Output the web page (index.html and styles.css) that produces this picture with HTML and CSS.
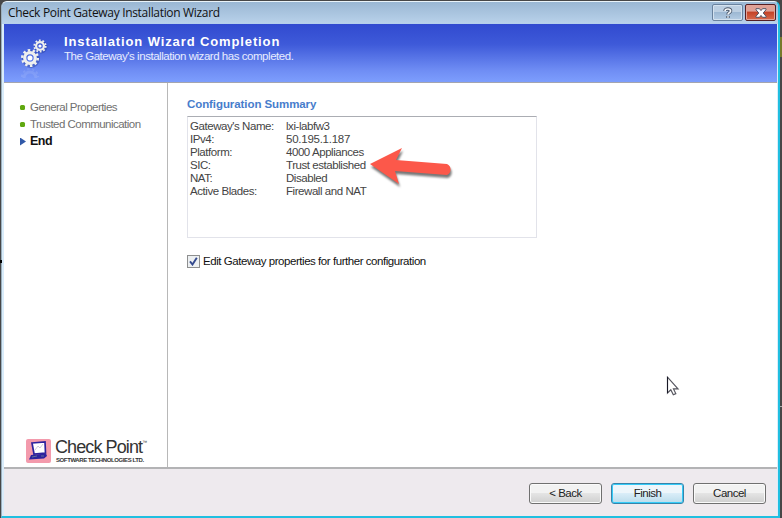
FILE: index.html
```
<!DOCTYPE html>
<html lang="en">
<head>
<meta charset="utf-8">
<title>Check Point Gateway Installation Wizard</title>
<link rel="stylesheet" href="styles.css">
</head>
<body>
<div class="window">
  <header class="titlebar">
    <span class="caption">Check Point Gateway Installation Wizard</span>
    <button class="ctl help" aria-label="Help"><svg width="12" height="14" viewBox="0 0 12 14"><path d="M3 5C3 2.300 8.600 2.300 8.600 5C8.600 6.600 6 6.700 6 8.500M6 10v2" fill="none" stroke="#4c596c" stroke-width="3.400"/><path d="M3 5C3 2.300 8.600 2.300 8.600 5C8.600 6.600 6 6.700 6 8.500M6 10.200v1.500" fill="none" stroke="#f4f7fa" stroke-width="1.700"/></svg></button>
    <button class="ctl close" aria-label="Close"><svg width="12" height="10" viewBox="0 0 12 10"><path d="M1 .7h3.500L6 2.600 7.500 .7H11v1.100L8.200 5l2.800 3.200v1.100H7.500L6 7.400 4.500 9.300H1V8.200L3.800 5 1 1.800z" fill="#fff" stroke="#535666"/></svg></button>
  </header>
  <section class="banner">
    <svg class="gears" width="30" height="42" viewBox="0 0 30 42">
      <g fill="none" stroke="#18308f" opacity=".35" transform="translate(1 1)"><circle cx="10" cy="20" r="7" stroke-width="4"/><circle cx="20" cy="8" r="5" stroke-width="3"/></g>
      <g fill="none" stroke="#f0f0ee">
        <circle cx="10" cy="20" r="5.300" stroke-width="3.200"/><circle cx="10" cy="20" r="7.800" stroke-width="2.500" stroke-dasharray="2.450 2.450"/>
        <circle cx="20" cy="8" r="3.900" stroke-width="2.300"/><circle cx="20" cy="8" r="5.700" stroke-width="1.800" stroke-dasharray="1.800 1.780"/>
      </g>
      <circle cx="10" cy="20" r="2.500" fill="#fff"/><circle cx="20" cy="8" r="1.600" fill="#fff"/>
      <g fill="none" stroke="#fff" opacity=".1"><path d="M4 40a6 6 0 0 1 12 0" stroke-width="3"/><path d="M2 39a8 8 0 0 1 16 0" stroke-width="2" stroke-dasharray="2.400 2.400"/></g>
    </svg>
    <div class="heading">
      <h1>Installation Wizard Completion</h1>
      <p>The Gateway's installation wizard has completed.</p>
    </div>
  </section>
  <main class="content">
    <nav class="sidebar">
      <ul>
        <li><i class="dot"></i><span>General Properties</span></li>
        <li><i class="dot"></i><span>Trusted Communication</span></li>
        <li class="current"><i class="tri"></i><span>End</span></li>
      </ul>
      <div class="brand">
        <svg width="25" height="24" viewBox="0 0 25 24"><rect width="25" height="24" rx="2" fill="#f39aac"/><path d="M6 4L19 3 19.500 14 8 15z" fill="#fff" stroke="#2c229e" stroke-width="1.700"/><path d="M9 11l3-4 2 2 3-4" fill="none" stroke="#b9b5cf" stroke-width=".7"/><path d="M5 16l15-1.500 1 2.500-3 2.500-15 1z" fill="#2c229e"/><path d="M6 18l5-1M15 17l3 0" stroke="#617398"/></svg>
        <div class="wordmark"><div class="name">Check Point<sup>™</sup></div><div class="sub">SOFTWARE TECHNOLOGIES LTD.</div></div>
      </div>
    </nav>
    <section class="panel">
      <h2>Configuration Summary</h2>
      <dl class="summary">
        <dt>Gateway's Name:</dt><dd class="host">lxi-labfw3</dd>
        <dt>IPv4:</dt><dd class="ip">50.195.1.187</dd>
        <dt>Platform:</dt><dd>4000 Appliances</dd>
        <dt>SIC:</dt><dd>Trust established</dd>
        <dt>NAT:</dt><dd>Disabled</dd>
        <dt>Active Blades:</dt><dd>Firewall and NAT</dd>
      </dl>
      <div class="option"><span class="check"><svg width="9" height="9" viewBox="0 0 9 9"><path d="M1 4.300L3.500 7.500 7.800 .8" fill="none" stroke="#344a8e" stroke-width="1.900"/></svg></span><span>Edit Gateway properties for further configuration</span></div>
    </section>
  </main>
  <footer class="footer">
    <button class="btn">&lt; Back</button>
    <button class="btn default">Finish</button>
    <button class="btn">Cancel</button>
  </footer>
</div>
<i class="tick t1"></i><i class="tick t2"></i><i class="tick t3"></i>
<svg class="arrow" width="92" height="46" viewBox="0 0 92 46"><path d="M3 18L35 2 29 14 80 18A6 6 0 0 1 80 29L28 25 32 38z" fill="#fc584a"/></svg>
<svg class="cursor" width="14" height="21" viewBox="0 0 14 21"><path d="M1.500 1.200V17l3.300-3.200 2.500 5 2.500-1.200-2.300-4.700H12z" fill="#fff" stroke="#56565f" stroke-width="1.200"/><path d="M1.500 1v16" stroke="#191926"/></svg>
</body>
</html>
```
FILE: styles.css
```
* { box-sizing: border-box; }
body { margin: 0; width: 782px; height: 518px; overflow: hidden; background: #474747; font: 11.5px/13px "Liberation Sans", sans-serif; color: #444; }
h1, h2, p, ul, dl, dd { margin: 0; padding: 0; }
button { font: inherit; padding: 0; }
.window { width: 779px; height: 517px; margin: 1px 0 0 1px; border: 1px solid #9bb0be; border-right: 2px solid #20bfe0; border-bottom: 2px solid #20bfe0; border-top-color: #e9f3f9; border-radius: 6px 6px 0 0; background: #d9ecfa; padding: 0 1px 0 2px; overflow: hidden; display: flex; flex-direction: column; }
.titlebar { height: 22px; flex: none; margin: 0 -1px 0 -2px; padding: 0 2px 0 6px; background: linear-gradient(#9ab7d3, #b8d1ea); display: flex; align-items: flex-start; border-bottom: 1px solid #b5cfec; }
.caption { font: 12px/22px "Open Sans", sans-serif; letter-spacing: -.32px; color: #111; flex: 1; white-space: nowrap; }
.ctl { width: 31px; height: 17px; margin: 2px 0 0 2px; display: flex; align-items: center; justify-content: center; border: 1px solid #69829e; border-radius: 2px; box-shadow: inset 0 0 0 1px #d4e2ef; background: linear-gradient(#bccfe2 45%, #9db8d3 50%, #b5cde4); }
.close { border-color: #551e22; box-shadow: inset 0 0 0 1px #e2a499; background: linear-gradient(#dfa196 40%, #c44327 48%, #d76b4e); }
.banner { height: 59px; flex: none; background: linear-gradient(#314acf, #3e5ad9 35%, #6f8df4 80%, #7d9efd); border-bottom: 1px solid #a4a5ae; display: flex; color: #fff; }
.gears { margin: 14px 0 0 16px; flex: none; }
.heading { padding: 11px 0 0 14px; }
h1 { font-size: 13px; line-height: 14px; letter-spacing: .88px; white-space: nowrap; }
.heading p { line-height: 14px; letter-spacing: -.46px; color: #e7ecff; white-space: nowrap; }
.content { height: 386px; flex: none; display: flex; background: #fff; border-bottom: 2px solid #b3b3b5; }
.sidebar { width: 164px; height: 384px; border-right: 1px solid #b8b8b8; padding: 16px 0 4px 16px; display: flex; flex-direction: column; justify-content: space-between; }
ul { list-style: none; }
li { height: 17px; line-height: 17px; display: flex; align-items: center; color: #707070; letter-spacing: -.53px; white-space: nowrap; }
.dot { width: 5px; height: 5px; border-radius: 1.5px; background: #60a810; margin-right: 5px; }
.tri { width: 6px; height: 8px; background: #3159a8; clip-path: polygon(0 0, 100% 50%, 0 100%); margin-right: 4px; }
.current { color: #111; font-weight: bold; font-size: 12.5px; letter-spacing: -.5px; }
.brand { display: flex; gap: 4px; padding-left: 6px; }
.wordmark { white-space: nowrap; color: #333; }
.name { font-size: 18px; line-height: 17px; letter-spacing: -.9px; }
.name sup { font-size: 5px; line-height: 0; vertical-align: 9px; }
.sub { font-size: 6px; line-height: 6px; font-weight: bold; letter-spacing: -.4px; padding: 1px 0 0 1px; }
.panel { padding: 14px 0 0 19px; }
h2 { font-size: 11.5px; line-height: 14px; letter-spacing: -.08px; color: #477dcc; }
.summary { width: 350px; height: 122px; margin-top: 5px; padding: 3px 2px; border: 1px solid #e2e3ea; border-top-color: #abadb3; display: grid; grid-template-columns: 96px 1fr; grid-auto-rows: 13px; align-content: start; letter-spacing: -.44px; white-space: nowrap; }
.summary .ip { letter-spacing: -.25px; }
.option { display: flex; align-items: center; gap: 3px; margin-top: 17px; color: #111; letter-spacing: -.45px; white-space: nowrap; }
.check { width: 13px; height: 13px; border: 1px solid #8e8f8f; background: #edf0f2; display: flex; align-items: center; justify-content: center; }
.footer { flex: 1; background: #eeeaee; display: flex; justify-content: flex-end; gap: 9px; padding: 14px 11px 0 0; }
.btn { width: 73px; height: 21px; border: 1px solid #707070; border-radius: 3px; box-shadow: inset 0 0 0 1px #fafafa; background: linear-gradient(#f2f2f2 48%, #e4e4e4 50%, #cfcfcf); color: #222; letter-spacing: -.5px; }
.default { border-color: #3684aa; box-shadow: inset 0 0 0 1px #35cbf8; background: linear-gradient(#edf6fb 48%, #d9edf8 50%, #badceb); }
.arrow { position: absolute; left: 367px; top: 146px; filter: drop-shadow(1px 3px 1px #0008); }
.cursor { position: absolute; left: 666px; top: 376px; }
.tick { position: absolute; left: 780px; width: 2px; height: 1px; background: #aaa; }
.t1 { top: 37px; height: 20px; background: #777a2b; }
.t2 { top: 406px; }
.t3 { left: 0; top: 260px; height: 3px; background: #000; }
```
